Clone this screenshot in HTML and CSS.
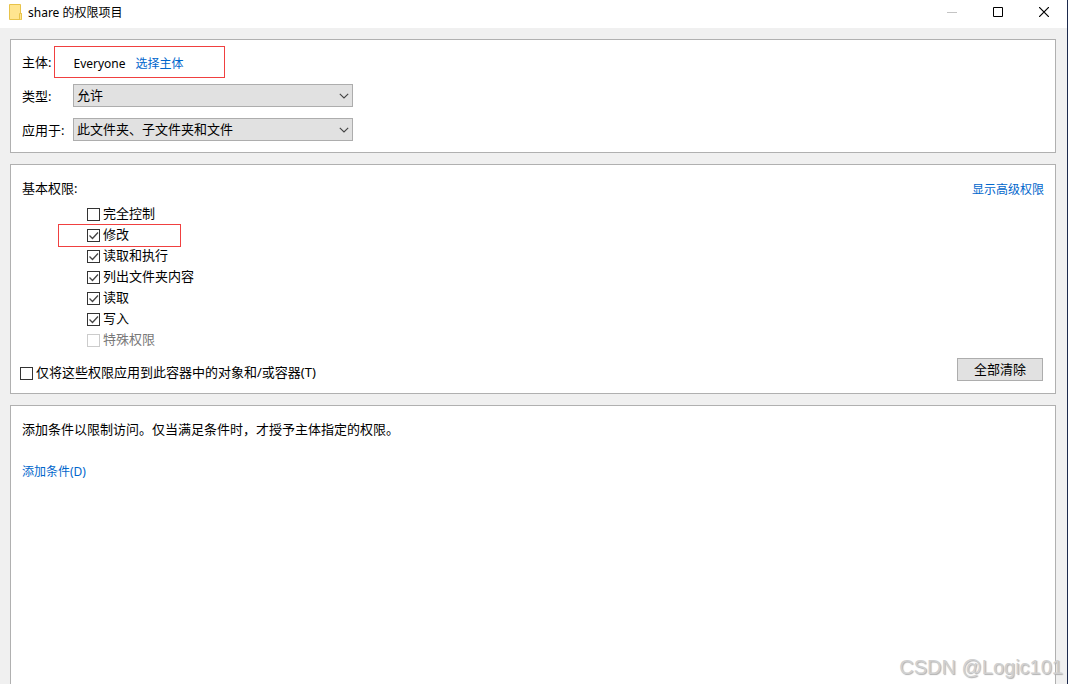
FILE: index.html
```html
<!DOCTYPE html>
<html lang="zh-CN">
<head>
<meta charset="utf-8">
<meta name="viewport" content="width=device-width, initial-scale=1">
<title>share 的权限项目</title>
<link rel="stylesheet" href="styles.css">
</head>
<body>
<div class="window">
  <header class="titlebar">
    <svg class="folder" width="14" height="16" viewBox="0 0 14 16" aria-hidden="true">
      <path d="M.5.5h11v9h1v6H.5z" fill="#ffe58f" stroke="#e8c34a"/>
      <path d="M10.500 15v-5.500h2v6" fill="#ffe58f" stroke="#e8c34a"/>
    </svg>
    <h1 class="title">share 的权限项目</h1>
    <div class="controls">
      <button class="control" type="button" aria-label="最小化" disabled><svg width="10" height="10"><path d="M0 5.500h10" stroke="#c4c4c4"/></svg></button>
      <button class="control" type="button" aria-label="最大化"><svg width="10" height="10"><path d="M.5.5h9v9h-9z" fill="none" stroke="#000"/></svg></button>
      <button class="control" type="button" aria-label="关闭"><svg width="10" height="10"><path d="M0 0l10 10M10 0L0 10" stroke="#000" stroke-width="1.200"/></svg></button>
    </div>
  </header>

  <main class="content">
    <section class="panel subject">
      <div class="row">
        <span>主体:</span>
        <div class="principal"><span>Everyone</span><a class="link" href="#">选择主体</a></div>
      </div>
      <div class="row field">
        <label class="field-label" for="type">类型:</label>
        <div class="combo">
          <select id="type"><option>允许</option></select>
          <svg width="10" height="6" viewBox="0 0 10 6"><path d="M.8.8L5 5 9.200.8" fill="none" stroke="#444" stroke-width="1.100"/></svg>
        </div>
      </div>
      <div class="row field">
        <label class="field-label" for="scope">应用于:</label>
        <div class="combo">
          <select id="scope"><option>此文件夹、子文件夹和文件</option></select>
          <svg width="10" height="6" viewBox="0 0 10 6"><path d="M.8.8L5 5 9.200.8" fill="none" stroke="#444" stroke-width="1.100"/></svg>
        </div>
      </div>
    </section>

    <section class="panel permissions">
      <div class="heading">
        <h2 class="heading-text">基本权限:</h2>
        <a class="link" href="#">显示高级权限</a>
      </div>
      <div class="list">
        <label class="check"><span class="box"><input type="checkbox"></span><span>完全控制</span></label>
        <label class="check marked"><span class="box"><input type="checkbox" checked><svg viewBox="0 0 13 13"><path d="M2.500 6.500l3 3 5.500-6"/></svg></span><span>修改</span></label>
        <label class="check"><span class="box"><input type="checkbox" checked><svg viewBox="0 0 13 13"><path d="M2.500 6.500l3 3 5.500-6"/></svg></span><span>读取和执行</span></label>
        <label class="check"><span class="box"><input type="checkbox" checked><svg viewBox="0 0 13 13"><path d="M2.500 6.500l3 3 5.500-6"/></svg></span><span>列出文件夹内容</span></label>
        <label class="check"><span class="box"><input type="checkbox" checked><svg viewBox="0 0 13 13"><path d="M2.500 6.500l3 3 5.500-6"/></svg></span><span>读取</span></label>
        <label class="check"><span class="box"><input type="checkbox" checked><svg viewBox="0 0 13 13"><path d="M2.500 6.500l3 3 5.500-6"/></svg></span><span>写入</span></label>
        <label class="check disabled"><span class="box"><input type="checkbox" disabled></span><span>特殊权限</span></label>
      </div>
      <div class="footer">
        <label class="check only"><span class="box"><input type="checkbox"></span><span>仅将这些权限应用到此容器中的对象和/或容器(T)</span></label>
        <button class="clear" type="button">全部清除</button>
      </div>
    </section>

    <section class="panel conditions">
      <p class="hint">添加条件以限制访问。仅当满足条件时，才授予主体指定的权限。</p>
      <a class="link" href="#">添加条件(D)</a>
    </section>
  </main>
  <div class="watermark">CSDN @Logic101</div>
</div>
</body>
</html>
```
FILE: styles.css
```css
* {
  box-sizing: border-box;
}

body {
  margin: 0;
  color: #000;
  font: 13px/20px "Noto Sans", "Noto Sans CJK SC", sans-serif;
}

select,
button {
  font: inherit;
  color: inherit;
}

.window {
  position: relative;
  display: flex;
  flex-direction: column;
  min-height: 100vh;
  border-right: 1px solid #1d2a4d;
  background: #f0f0f0;
}

.titlebar {
  display: flex;
  align-items: center;
  height: 28px;
  padding-left: 9px;
  padding-bottom: 4px;
  background: #fff;
}

.title {
  margin: 0 auto 0 5px;
  padding-top: 2px;
  font-size: 12px;
  font-weight: 400;
}

.controls {
  display: flex;
}

.control {
  display: grid;
  place-items: center;
  width: 46px;
  height: 24px;
  padding: 0;
  border: 0;
  background: none;
}

.content {
  flex: 1;
  display: flex;
  flex-direction: column;
  gap: 11px;
  padding: 11px 11px 0 10px;
}

.panel {
  border: 1px solid #b0b0b0;
  background: #fff;
}

.link {
  color: #0066cc;
  font-size: 12px;
  text-decoration: none;
}

.subject {
  padding: 6px 11px 11px;
}

.row {
  display: flex;
  align-items: center;
}

.principal {
  display: flex;
  align-items: center;
  gap: 10px;
  width: 171px;
  height: 32px;
  margin-left: 3px;
  padding: 4px 0 0 18px;
  border: 1px solid #f04040;
  font-size: 12px;
}

.field {
  margin-top: 6px;
}

.field + .field {
  margin-top: 11px;
}

.field-label {
  width: 51px;
}

.combo {
  display: grid;
  align-items: center;
  width: 280px;
}

.combo select,
.combo svg {
  grid-area: 1 / 1;
}

.combo select {
  appearance: none;
  height: 23px;
  padding: 0 20px 2px 3px;
  border: 1px solid #adadad;
  border-radius: 0;
  background: #e1e1e1;
}

.combo svg {
  justify-self: end;
  margin-right: 4px;
  pointer-events: none;
}

.permissions {
  padding: 13px 11px 10px 9px;
}

.heading {
  display: flex;
  justify-content: space-between;
  height: 20px;
  padding-left: 2px;
}

.heading .link {
  padding-top: 2px;
}

.heading-text {
  margin: 0;
  font-size: 13px;
  font-weight: 400;
}

.list {
  display: flex;
  flex-direction: column;
  align-items: flex-start;
  padding: 6px 0 7px 39px;
}

.check {
  display: flex;
  align-items: center;
  gap: 3px;
  height: 21px;
  padding-bottom: 2px;
}

.list .check {
  padding: 0 0 4px 28px;
}

.list .marked {
  width: 121px;
  outline: 1px solid #f04040;
}

.box {
  display: grid;
  width: 13px;
  height: 13px;
  margin-top: 3px;
}

.box input,
.box svg {
  grid-area: 1 / 1;
  width: 13px;
  height: 13px;
}

.box input {
  appearance: none;
  margin: 0;
  border: 1px solid #333;
  background: #fff;
}

.box svg {
  fill: none;
  stroke: #444;
  stroke-width: 1.3;
  pointer-events: none;
}

.box input:not(:checked) + svg {
  display: none;
}

.disabled {
  color: #787878;
}

.box input:disabled {
  border-color: #ccc;
}

.footer {
  display: flex;
  justify-content: space-between;
  align-items: flex-start;
}

.only {
  margin-top: 4px;
}

.clear {
  width: 86px;
  height: 23px;
  margin-right: 1px;
  padding: 0 0 2px;
  border: 1px solid #adadad;
  background: #e1e1e1;
  line-height: 20px;
}

.conditions {
  flex: 1;
  padding: 13px 11px;
  border-bottom: 0;
}

.hint {
  margin: 0 0 22px;
}

.watermark {
  position: absolute;
  right: 4px;
  bottom: 5px;
  color: #d0d0d0;
  font: 20px/24px "Liberation Sans", sans-serif;
  text-shadow: 1px 1px 1px #b0b0b0;
}
```
